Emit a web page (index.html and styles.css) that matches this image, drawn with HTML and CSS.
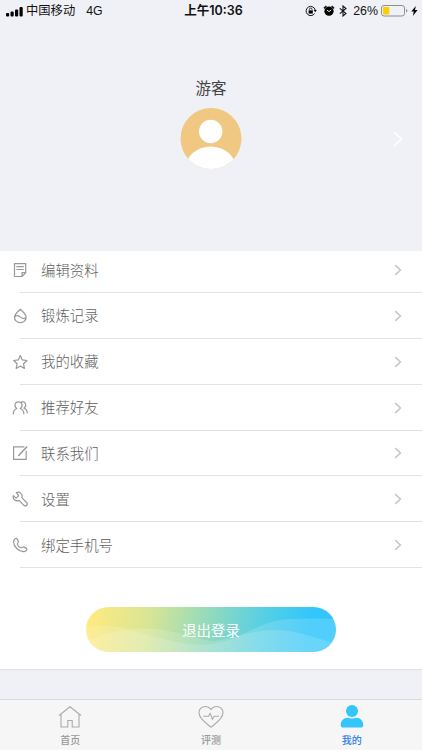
FILE: index.html
```html
<!DOCTYPE html>
<html lang="zh-CN">
<head>
    <meta charset="UTF-8">
    <meta name="viewport" content="width=device-width, initial-scale=1.0">
    <title>我的</title>
    <link rel="stylesheet" href="styles.css">
</head>
<body>
    <div class="status-bar">
        <div class="status-left">
            <svg class="signal" width="17" height="11" viewBox="0 0 17 11">
                <rect x="0" y="7" width="3.2" height="3.5" rx="1"/>
                <rect x="4.5" y="5.5" width="3.2" height="5" rx="1"/>
                <rect x="9" y="3.5" width="3.2" height="7" rx="1"/>
                <rect x="13.5" y="1" width="3.2" height="9.5" rx="1"/>
            </svg>
            <span class="carrier">中国移动</span>
            <span class="network">4G</span>
        </div>
        <div class="status-time">上午10:36</div>
        <div class="status-right">
            <svg class="lock" width="12" height="12" viewBox="0 0 12 12">
                <path d="M9.6 8.5A4.6 4.6 0 1 1 10.2 5" fill="none" stroke="#111" stroke-width="1"/>
                <path d="M8.7 5h3l-1.5 2.2z"/>
                <rect x="3.6" y="5.4" width="4.2" height="3.2"/>
                <path d="M4.4 5.5V4.4a1.3 1.3 0 0 1 2.6 0v1.1" fill="none" stroke="#111" stroke-width=".8"/>
            </svg>
            <svg class="alarm" width="12" height="12" viewBox="0 0 12 12">
                <circle cx="6" cy="6.2" r="4.6"/>
                <path d="M1 3.4L3.4 1.2M11 3.4L8.6 1.2" stroke="#111" stroke-width="1.6"/>
                <path d="M3.9 5l2.1 1.6L8.2 5" fill="none" stroke="#fff" stroke-width=".9"/>
            </svg>
            <svg class="bluetooth" width="8" height="12" viewBox="0 0 8 12">
                <path d="M.8 3.3L7 8.5 4 11V1l3 2.5L.8 8.7" fill="none" stroke="#111" stroke-width="1.1"/>
            </svg>
            <span class="percent">26%</span>
            <svg class="battery" width="27" height="12" viewBox="0 0 27 12">
                <rect x=".5" y=".5" width="23" height="10.5" rx="2.5" fill="none" stroke="#8e8e92"/>
                <rect x="2" y="2" width="6.3" height="7.5" rx="1" fill="#fc0"/>
                <path d="M25 4v3.6q1.4-.6 1.4-1.8T25 4z" fill="#8e8e92"/>
            </svg>
            <svg class="bolt" width="7" height="10" viewBox="0 0 7 10">
                <path d="M4.8 0L.3 5.6h2.5L1.8 10l4.8-5.9H4z"/>
            </svg>
        </div>
    </div>

    <div class="profile">
        <div class="profile-name">游客</div>
        <svg class="avatar" width="62" height="62" viewBox="0 0 62 62">
            <clipPath id="avatarClip"><circle cx="31" cy="30.5" r="30.5"/></clipPath>
            <g clip-path="url(#avatarClip)">
                <rect width="62" height="62" fill="#f0c882"/>
                <circle cx="30.7" cy="23.5" r="11.7" fill="#fff"/>
                <ellipse cx="30.7" cy="61" rx="25.5" ry="22.5" fill="#fff"/>
            </g>
        </svg>
        <svg class="profile-arrow" width="10" height="16" viewBox="0 0 10 16">
            <path d="M1 1l7.5 7L1 15"/>
        </svg>
    </div>

    <div class="panel">
        <ul class="menu">
            <li>
                <svg class="icon" viewBox="0 0 16 16"><path d="M2.5 1.6h11.2v9.2L10 14.5H2.5zM13.7 10.6H10v3.9M4.8 4.7h6.6M4.8 7.5h6.6"/></svg>
                <span>编辑资料</span>
                <svg class="arrow" viewBox="0 0 8 12"><path d="M1.2 1.2L6.4 6l-5.2 4.8"/></svg>
            </li>
            <li>
                <svg class="icon" viewBox="0 0 16 16"><path d="M8.3 1.3C6.3 3.2 2.5 6.3 2.5 9.2a5.8 5.5 0 0 0 11.6 0c0-2.9-3.8-6-5.8-7.9zM2.6 9c2-2 3.8-1.6 5.4-.1s3.8 2 5.8.8"/></svg>
                <span>锻炼记录</span>
                <svg class="arrow" viewBox="0 0 8 12"><path d="M1.2 1.2L6.4 6l-5.2 4.8"/></svg>
            </li>
            <li>
                <svg class="icon" viewBox="0 0 16 16"><path d="M8.3 1.6l2 4.3 4.6.6-3.4 3.2.9 4.7-4.1-2.3-4.1 2.3.9-4.7-3.4-3.2 4.6-.6z"/></svg>
                <span>我的收藏</span>
                <svg class="arrow" viewBox="0 0 8 12"><path d="M1.2 1.2L6.4 6l-5.2 4.8"/></svg>
            </li>
            <li>
                <svg class="icon" viewBox="0 0 16 16"><path d="M1.3 13.8c0-2.8 1.6-4.6 3.5-5.3C1.8 6.7 2.6 1.8 6.5 1.8s4.7 4.9 1.7 6.7c2 .7 3.6 2.5 3.6 5.3M9.8 1.8c4-.7 5.2 4.3 2.2 6.4 2 .7 3.2 2.4 3.3 4.8"/></svg>
                <span>推荐好友</span>
                <svg class="arrow" viewBox="0 0 8 12"><path d="M1.2 1.2L6.4 6l-5.2 4.8"/></svg>
            </li>
            <li>
                <svg class="icon" viewBox="0 0 16 16"><path d="M12 1.8H1.6v12.6h12.6V6.3"/><path class="pen" d="M6.7 10.4l8-8.4"/></svg>
                <span>联系我们</span>
                <svg class="arrow" viewBox="0 0 8 12"><path d="M1.2 1.2L6.4 6l-5.2 4.8"/></svg>
            </li>
            <li>
                <svg class="icon" viewBox="0 0 16 16"><path d="M4.4 1.6a4 4 0 0 1 5.4 5.1l4.8 4.8a1.7 1.7 0 0 1-2.7 2.8L7.2 9.4A4.1 4.1 0 0 1 1.3 4.7l2.8 2.4 2.6-2.3z"/></svg>
                <span>设置</span>
                <svg class="arrow" viewBox="0 0 8 12"><path d="M1.2 1.2L6.4 6l-5.2 4.8"/></svg>
            </li>
            <li>
                <svg class="icon" viewBox="0 0 16 16"><path d="M1.9 3.3C2.7 1.4 4.5.9 5.3 2.2l1 2.1c.5 1.3-1.2 1.9-1 2.9.4 1.6 1.900 3 3.5 3.6 1.1.4 1.7-1.3 2.9-.9l2.4 1.2c1.5.8.6 2.7-1.2 3.3C7.600 15.800.2 9 1.9 3.3z"/></svg>
                <span>绑定手机号</span>
                <svg class="arrow" viewBox="0 0 8 12"><path d="M1.2 1.2L6.4 6l-5.2 4.8"/></svg>
            </li>
        </ul>

        <button class="logout">
            <svg class="waves" viewBox="0 0 250 45" preserveAspectRatio="none">
                <path d="M0 21C35 12 58 32 105 37S165 13 205 12 235 12 250 12V45H0z"/>
                <path d="M0 34C30 22 55 17 92 26S120 37 155 28 205 22 250 37V45H0z"/>
            </svg>
            <span>退出登录</span>
        </button>
    </div>

    <div class="tab-bar">
        <div class="tab">
            <svg width="24" height="24" viewBox="0 0 24 24"><path d="M1 10.5L12 1.8l11 8.7M3 9v13h6.8v-6.5h4.4V22H21V9"/></svg>
            <span>首页</span>
        </div>
        <div class="tab">
            <svg width="26" height="24" viewBox="0 0 26 24"><path d="M13 22.2C8.5 18.5 1 14 1 7.8 1 1.2 9.4-.5 13 4.3 16.6-.5 25 1.2 25 7.8c0 6.2-7.5 10.7-12 14.4z"/><path d="M5.2 11.2h5.3l1.6-2.8 2.3 5.8 1.7-3h4.8"/></svg>
            <span>评测</span>
        </div>
        <div class="tab active">
            <svg width="24" height="24" viewBox="0 0 24 24"><circle cx="12" cy="6" r="6"/><path d="M.7 20c0-4.4 3.3-7.3 6.8-7.3 1.5 0 2.6.9 4.5.9s3-.9 4.5-.9c3.5 0 6.8 2.9 6.800 7.3 0 1.7-1 2.6-2.7 2.6H3.4C1.7 22.6.7 21.7.7 20z"/></svg>
            <span>我的</span>
        </div>
    </div>
</body>
</html>
```
FILE: styles.css
```css
body {
    font-family: Inter, 'Noto Sans CJK SC', sans-serif;
    display: flex;
    flex-direction: column;
    height: 750px;
    margin: 0;
    background-color: #f0f1f7;
    overflow: hidden;
}

.status-bar {
    display: grid;
    grid-template-columns: 1fr auto 1fr;
    align-items: center;
    height: 22px;
    padding: 0 4px 0 6px;
    font-size: 12px;
    line-height: 22px;
    color: #111;
}

.status-left,
.status-right {
    display: flex;
    align-items: center;
}

.status-right {
    justify-content: flex-end;
}

.carrier {
    margin-left: 3px;
    font-size: 12.3px;
}

.network {
    margin-left: 11px;
    font-family: 'Liberation Sans', sans-serif;
    font-size: 12.3px;
}

.status-time {
    padding-left: 3px;
    font-weight: 600;
    font-size: 12.5px;
}

.alarm {
    margin-left: 6px;
}

.bluetooth {
    margin-left: 4px;
}

.percent {
    margin-left: 6px;
    font-family: 'Liberation Sans', sans-serif;
    font-size: 12.4px;
}

.battery {
    margin-left: 3px;
}

.bolt {
    margin-left: 3px;
}

.profile {
    position: relative;
    display: flex;
    flex-direction: column;
    align-items: center;
    box-sizing: border-box;
    height: 228.5px;
    padding-top: 56px;
}

.profile-name {
    height: 22px;
    line-height: 22px;
    font-size: 15.5px;
    color: #444;
}

.avatar {
    margin-top: 8px;
}

.profile-arrow {
    position: absolute;
    right: 19px;
    top: 109px;
    fill: none;
    stroke: #fff;
    stroke-width: 1.4;
}

.panel {
    height: 419px;
    box-sizing: border-box;
    background-color: #fff;
    border-bottom: 1px solid #e2e3e8;
}

.menu {
    list-style: none;
    margin: 0;
    padding: 0;
}

.menu li {
    display: flex;
    align-items: center;
    box-sizing: border-box;
    height: 45.85px;
    padding: 0 20px 0 12px;
    font-size: 14.4px;
    font-weight: 300;
    line-height: 20px;
    color: #606060;
    background: linear-gradient(#e3e3e5, #e3e3e5) 20px 100% / 100% 1px no-repeat;
}

.menu li:first-child {
    height: 42.5px;
    padding-bottom: 3px;
}

.menu span {
    flex: 1;
    margin-left: 13px;
    padding-top: 1px;
}

.icon {
    width: 16px;
    height: 16px;
    fill: none;
    stroke: #999;
    stroke-width: 1.2;
    stroke-linejoin: round;
    stroke-linecap: round;
}

.pen {
    stroke-width: 1.5;
}

.arrow {
    width: 8px;
    height: 12px;
    fill: none;
    stroke: #c7c7cb;
    stroke-width: 1.6;
}

.logout {
    position: relative;
    display: block;
    width: 250px;
    height: 45px;
    margin: 39px auto 0 86px;
    padding: 0 0 1px;
    border: none;
    border-radius: 23px;
    overflow: hidden;
    font-family: inherit;
    font-size: 14.4px;
    color: #fff;
    background: linear-gradient(100deg, #fdea80 3%, #d9e595 25%, #8ed9bf 50%, #55cfe5 70%, #33c6fb 88%);
}

.logout span {
    position: relative;
}

.waves {
    position: absolute;
    left: 0;
    top: 0;
    width: 100%;
    height: 100%;
    fill: rgba(255, 255, 255, 0.15);
}

.tab-bar {
    display: flex;
    box-sizing: border-box;
    height: 51px;
    margin-top: auto;
    border-top: 1px solid #d9dadd;
    background-color: #f6f6f6;
}

.tab {
    flex: 1;
    display: flex;
    flex-direction: column;
    align-items: center;
    padding-top: 5px;
    font-size: 10px;
    font-weight: 500;
    line-height: 14px;
    color: #999;
}

.tab svg {
    fill: none;
    stroke: #aaa;
    stroke-width: 1.1;
}

.tab span {
    margin-top: 4px;
}

.tab.active {
    color: #2f7de9;
}

.tab.active svg {
    fill: #33c6fb;
    stroke: none;
}
```
